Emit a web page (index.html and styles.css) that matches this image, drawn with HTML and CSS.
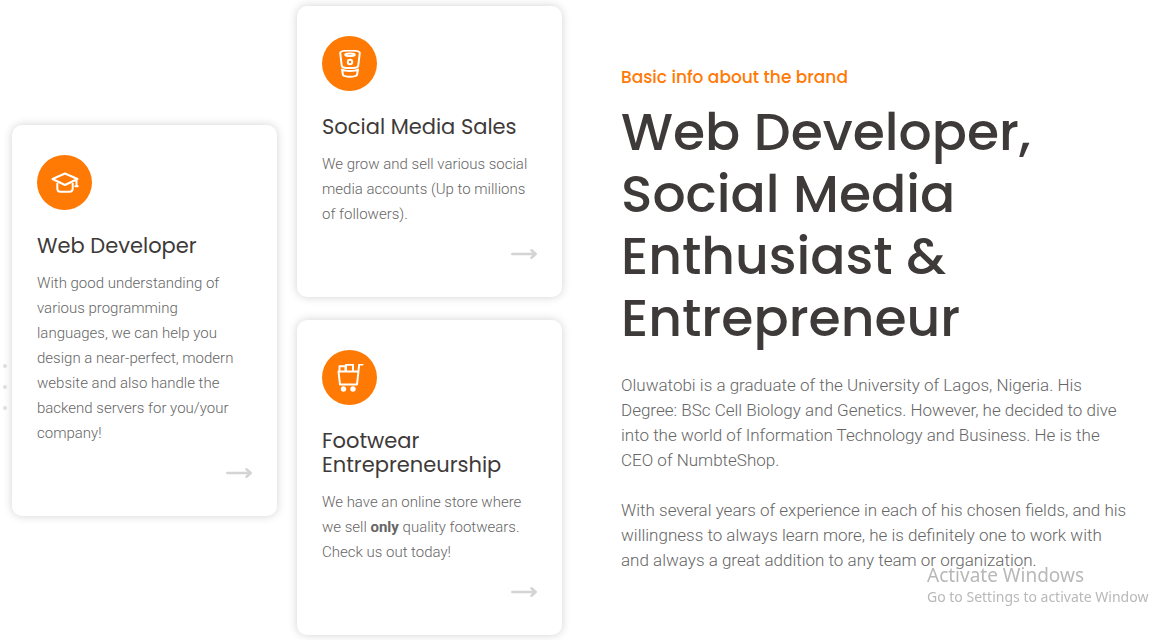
FILE: index.html
```
<!DOCTYPE html>
<html lang="en">
<head>
<meta charset="utf-8">
<meta name="viewport" content="width=device-width, initial-scale=1">
<title>Basic info about the brand</title>
<link rel="stylesheet" href="styles.css">
</head>
<body>
<main class="about">
  <div class="dots" aria-hidden="true"><span class="dot"></span><span class="dot"></span><span class="dot"></span></div>
  <section class="services">
    <div class="column">
      <article class="card">
        <div class="badge">
          <svg class="icon" viewBox="0 0 28 28" aria-hidden="true"><path d="M1.500 10 14 4.500l12.500 5.500L14 16zM6.300 12.500v7c0 2.200 1 3.200 3.200 3.200h9c2.200 0 3.200-1 3.200-3.200v-7M25.500 10.500V17M24.300 17.300h2.400"/></svg>
        </div>
        <h2 class="card-title">Web Developer</h2>
        <p class="card-text">With good understanding of various programming languages, we can help you design a near-perfect, modern website and also handle the backend servers for you/your company!</p>
        <a class="more" href="#" aria-label="Web Developer"><svg class="arrow" viewBox="0 0 26 26" aria-hidden="true"><path d="M1.300 13h23M20.500 9.300l4.200 3.700-4.200 3.700"/></svg></a>
      </article>
    </div>
    <div class="column">
      <article class="card">
        <div class="badge">
          <svg class="icon" viewBox="0 0 28 28" aria-hidden="true"><path d="M4.200 3c0-3.200 19.600-3.200 19.600 0l-1.600 13c-.5 2.800-15.900 2.800-16.400 0zM6 19.500l1 5.500c1.500 2.200 12.500 2.200 14 0l1-5.500c-3 2-13 2-16 0z"/><ellipse cx="14" cy="4.800" rx="4.800" ry="1.300"/><circle cx="14" cy="12" r="2.200"/></svg>
        </div>
        <h2 class="card-title">Social Media Sales</h2>
        <p class="card-text">We grow and sell various social media accounts (Up to millions of followers).</p>
        <a class="more" href="#" aria-label="Social Media Sales"><svg class="arrow" viewBox="0 0 26 26" aria-hidden="true"><path d="M1.300 13h23M20.500 9.300l4.200 3.700-4.200 3.700"/></svg></a>
      </article>
      <article class="card">
        <div class="badge">
          <svg class="icon" viewBox="0 0 28 28" aria-hidden="true"><path d="M2.500 7.500h19.300M2.500 7.500l1.500 13h17l2.200-20H26.500M3.500 7.300V2.200h6v5.100M10 7.300V.8h7v6.500"/><circle class="wheel" cx="7.500" cy="25" r="2.700"/><circle class="wheel" cx="17" cy="25" r="2.700"/></svg>
        </div>
        <h2 class="card-title">Footwear Entrepreneurship</h2>
        <p class="card-text">We have an online store where we sell <strong>only</strong> quality footwears. Check us out today!</p>
        <a class="more" href="#" aria-label="Footwear Entrepreneurship"><svg class="arrow" viewBox="0 0 26 26" aria-hidden="true"><path d="M1.300 13h23M20.500 9.300l4.200 3.700-4.200 3.700"/></svg></a>
      </article>
    </div>
  </section>
  <section class="intro">
    <p class="label">Basic info about the brand</p>
    <h1 class="title">Web Developer, Social Media Enthusiast &amp; Entrepreneur</h1>
    <p class="copy">Oluwatobi is a graduate of the University of Lagos, Nigeria. His Degree: BSc Cell Biology and Genetics. However, he decided to dive into the world of Information Technology and Business. He is the CEO of NumbteShop.</p>
    <p class="copy">With several years of experience in each of his chosen fields, and his willingness to always learn more, he is definitely one to work with and always a great addition to any team or organization.</p>
  </section>
</main>
<aside class="watermark">
  <p class="watermark-title">Activate Windows</p>
  <p class="watermark-text">Go to Settings to activate Window</p>
</aside>
</body>
</html>
```
FILE: styles.css
```
* { box-sizing: border-box; }

body {
  margin: 0;
  background: #fff;
  color: #666;
  font-family: Roboto, "Liberation Sans", sans-serif;
  font-weight: 300;
  overflow-x: hidden;
}

h1, h2, p { margin: 0; }

.about {
  position: relative;
  display: flex;
  align-items: center;
  gap: 59px;
  min-height: 100vh;
  padding: 6px 22px 5px 12px;
}

.services {
  flex: 550 1 0;
  min-width: 0;
  display: grid;
  grid-template-columns: 1fr 1fr;
  align-items: center;
  gap: 20px;
}

.column { display: grid; gap: 23px; min-width: 0; }

.card {
  display: flex;
  flex-direction: column;
  padding: 30px 25px;
  background: #fff;
  border-radius: 10px;
  box-shadow: 0 0 10px rgba(0, 0, 0, 0.18);
}

.badge {
  display: grid;
  place-items: center;
  width: 55px;
  height: 55px;
  border-radius: 50%;
  background: #ff7a05;
}

.icon {
  width: 28px;
  height: 28px;
  fill: none;
  stroke: #fff;
  stroke-width: 2;
  stroke-linecap: round;
  stroke-linejoin: round;
}

.wheel { fill: #fff; stroke: none; }

.card-title {
  margin: 24px 0 13px;
  color: #3e3a39;
  font: 400 21px/24px Poppins, Inter, sans-serif;
}

.card-text { font-size: 15px; line-height: 25px; }

.card-text strong { font-weight: 700; }

.more { align-self: flex-end; height: 26px; margin-top: 14px; }

.arrow {
  display: block;
  width: 26px;
  height: 26px;
  fill: none;
  stroke: #d5d3d3;
  stroke-width: 2.500;
  stroke-linecap: round;
  stroke-linejoin: round;
}

.intro { flex: 511 1 0; min-width: 0; padding-bottom: 4px; }

.label {
  color: #ff7a05;
  font: 500 17px/24px Poppins, Inter, sans-serif;
}

.title {
  margin: 12px 0 24px;
  color: #3e3a39;
  font: 500 52px/62px Poppins, Inter, sans-serif;
}

.copy { font-size: 17px; line-height: 25px; }

.copy + .copy { margin-top: 25px; }

.dots {
  position: absolute;
  left: 3px;
  top: 364px;
  display: grid;
  gap: 17px;
}

.dot { width: 4px; height: 4px; border-radius: 50%; background: #dedede; }

.watermark {
  position: fixed;
  left: calc(100% - 227px);
  bottom: 33px;
  color: #b8b8b8;
  font-family: "Segoe UI", "Noto Sans", sans-serif;
  font-weight: 400;
  white-space: nowrap;
  pointer-events: none;
}

.watermark-title { font-size: 19px; line-height: 24px; }

.watermark-text { font-size: 14px; line-height: 20px; }
```
